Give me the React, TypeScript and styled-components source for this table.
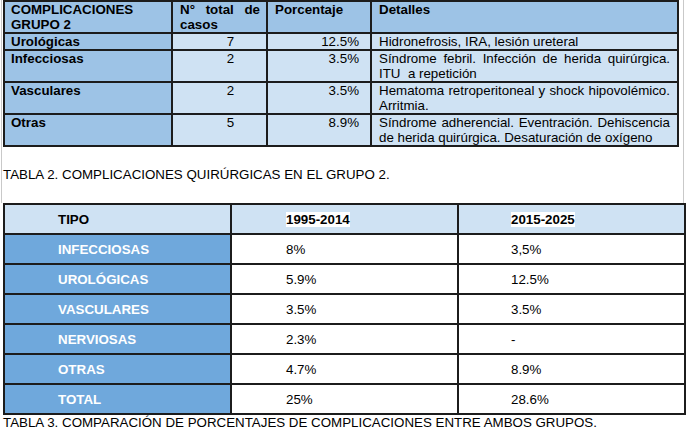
import React from "react";
import styled, { createGlobalStyle } from "styled-components";

const GlobalStyle = createGlobalStyle`
  html, body { margin: 0; padding: 0; background: #ffffff; }
  body {
    font-family: "Liberation Sans", Arial, sans-serif;
    font-size: 13.33px;
    color: #000000;
  }
`;

const Page = styled.div`
  width: 686px;
  height: 433px;
  overflow: hidden;
  background: #ffffff;
`;

const TopSection = styled.section`
  box-sizing: border-box;
  width: 683px;
  margin-left: 1px;
  padding: 0 0 21px 1px;
  border-left: 1px solid #c9c9c9;
  border-right: 1px solid #c9c9c9;
`;

const GroupTable = styled.div`
  display: grid;
  grid-template-columns: 166px 93px 102px 305px;
  gap: 2px;
  padding: 2px;
  width: fit-content;
  background: #1c1c1c;
`;

type Align = "left" | "center" | "right" | "justify";

const GroupCell = styled.div<{ $bg: string; $align?: Align; $pl?: number; $pr?: number; $bold?: boolean }>`
  background: ${(p) => p.$bg};
  text-align: ${(p) => p.$align ?? "left"};
  padding: 0 ${(p) => p.$pr ?? 6}px 0 ${(p) => p.$pl ?? 6}px;
  font-weight: ${(p) => (p.$bold ? 700 : 400)};
  line-height: 15px;
`;

const Caption = styled.p<{ $mt: number }>`
  margin: ${(p) => p.$mt}px 0 0 0;
  line-height: 15px;
  white-space: nowrap;
`;

const CompareTable = styled.div`
  display: grid;
  grid-template-columns: repeat(3, 225px);
  gap: 2px;
  padding: 2px;
  margin-left: 3px;
  width: fit-content;
  background: #1c1c1c;
`;

const CompareCell = styled.div<{ $bg: string; $color?: string; $bold?: boolean; $pl: number }>`
  display: flex;
  align-items: center;
  height: 28px;
  background: ${(p) => p.$bg};
  color: ${(p) => p.$color ?? "#000000"};
  font-weight: ${(p) => (p.$bold ? 700 : 400)};
  padding-left: ${(p) => p.$pl}px;
  white-space: nowrap;
`;

const Highlight = styled.span`
  background: #ffffff;
`;

const BottomCaption = styled.p`
  margin: 0 0 0 3px;
  line-height: 15px;
  white-space: nowrap;
`;

const DARK = "#9dc3e6";
const LIGHT = "#cfe2f3";
const MID = "#6fa8dc";

const groupRows = [
  { name: "Urológicas", cases: "7", pct: "12.5%", detail: "Hidronefrosis, IRA, lesión ureteral" },
  { name: "Infecciosas", cases: "2", pct: "3.5%", detail: "Síndrome febril. Infección de herida quirúrgica. ITU\u00a0 a repetición" },
  { name: "Vasculares", cases: "2", pct: "3.5%", detail: "Hematoma retroperitoneal y shock hipovolémico. Arritmia." },
  { name: "Otras", cases: "5", pct: "8.9%", detail: "Síndrome adherencial. Eventración. Dehiscencia de herida quirúrgica. Desaturación de oxígeno" },
];

const compareRows = [
  { tipo: "INFECCIOSAS", a: "8%", b: "3,5%" },
  { tipo: "UROLÓGICAS", a: "5.9%", b: "12.5%" },
  { tipo: "VASCULARES", a: "3.5%", b: "3.5%" },
  { tipo: "NERVIOSAS", a: "2.3%", b: "-" },
  { tipo: "OTRAS", a: "4.7%", b: "8.9%" },
  { tipo: "TOTAL", a: "25%", b: "28.6%" },
];

export default function App() {
  return (
    <>
      <GlobalStyle />
      <Page>
        <TopSection>
          <GroupTable>
            <GroupCell $bg={DARK} $bold>COMPLICACIONES GRUPO 2</GroupCell>
            <GroupCell $bg={DARK} $bold $align="justify" $pl={7}>N° total de casos</GroupCell>
            <GroupCell $bg={DARK} $bold $pl={7}>Porcentaje</GroupCell>
            <GroupCell $bg={DARK} $bold $pl={7}>Detalles</GroupCell>
            {groupRows.map((r) => (
              <React.Fragment key={r.name}>
                <GroupCell $bg={DARK} $bold>{r.name}</GroupCell>
                <GroupCell $bg={LIGHT} $align="center" $pl={22} $pr={0}>{r.cases}</GroupCell>
                <GroupCell $bg={LIGHT} $align="right" $pr={11}>{r.pct}</GroupCell>
                <GroupCell $bg={LIGHT} $align="justify" $pl={7} $pr={7}>{r.detail}</GroupCell>
              </React.Fragment>
            ))}
          </GroupTable>
          <Caption $mt={20}>TABLA 2. COMPLICACIONES QUIRÚRGICAS EN EL GRUPO 2.</Caption>
        </TopSection>
        <CompareTable>
          <CompareCell $bg={LIGHT} $bold $pl={53}>TIPO</CompareCell>
          <CompareCell $bg={LIGHT} $bold $pl={54}><Highlight>1995-2014</Highlight></CompareCell>
          <CompareCell $bg={LIGHT} $bold $pl={52}><Highlight>2015-2025</Highlight></CompareCell>
          {compareRows.map((r) => (
            <React.Fragment key={r.tipo}>
              <CompareCell $bg={MID} $color="#ffffff" $bold $pl={53}>{r.tipo}</CompareCell>
              <CompareCell $bg="#ffffff" $pl={54}>{r.a}</CompareCell>
              <CompareCell $bg="#ffffff" $pl={52}>{r.b}</CompareCell>
            </React.Fragment>
          ))}
        </CompareTable>
        <BottomCaption>TABLA 3. COMPARACIÓN DE PORCENTAJES DE COMPLICACIONES ENTRE AMBOS GRUPOS.</BottomCaption>
      </Page>
    </>
  );
}
